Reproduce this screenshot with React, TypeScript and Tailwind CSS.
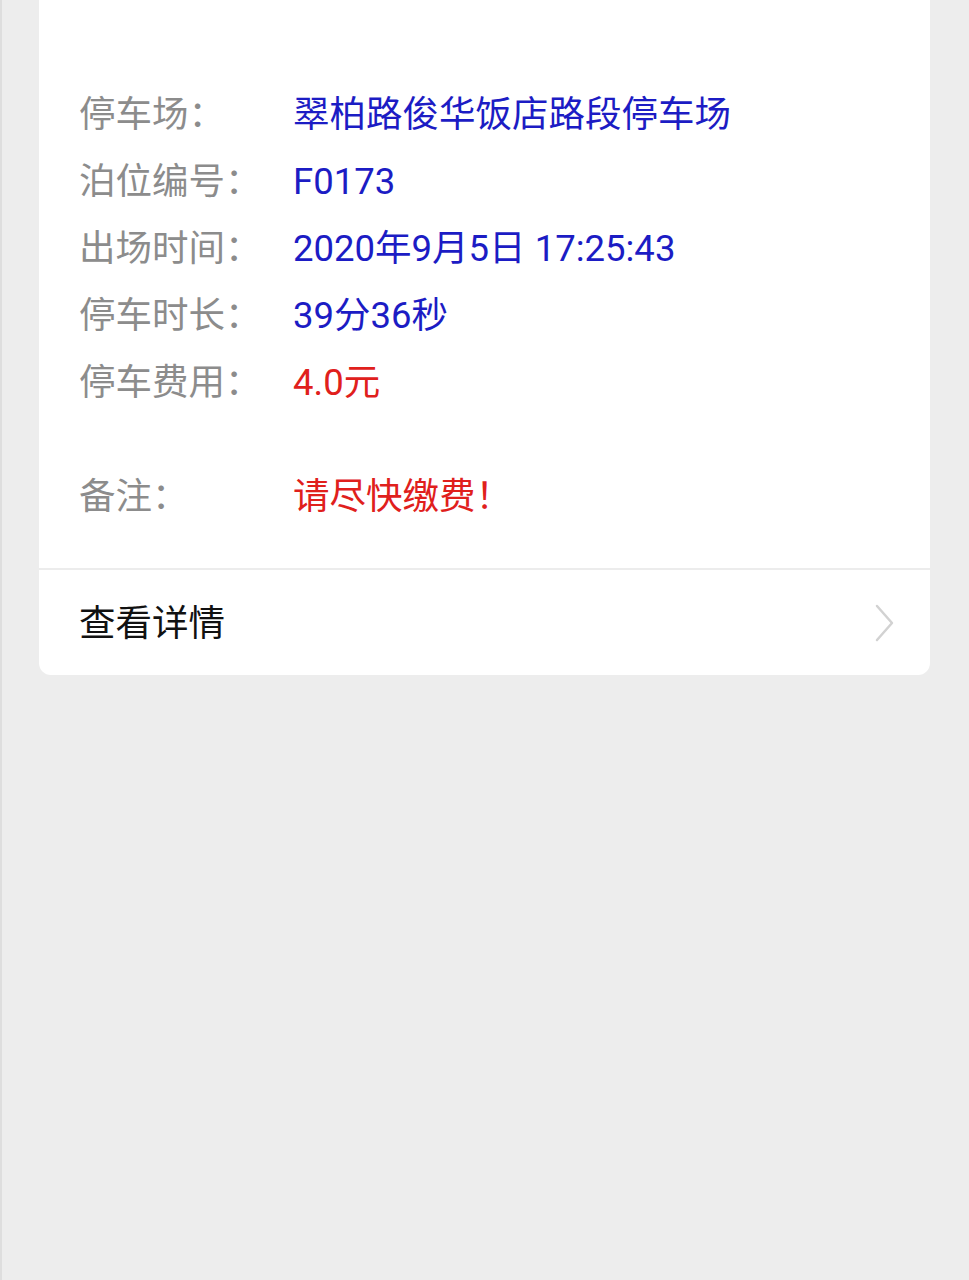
interface Row {
  label: string
  value: string
  tone: 'blue' | 'red'
}

const rows: Row[] = [
  { label: '停车场：', value: '翠柏路俊华饭店路段停车场', tone: 'blue' },
  { label: '泊位编号：', value: 'F0173', tone: 'blue' },
  { label: '出场时间：', value: '2020年9月5日 17:25:43', tone: 'blue' },
  { label: '停车时长：', value: '39分36秒', tone: 'blue' },
  { label: '停车费用：', value: '4.0元', tone: 'red' },
]

function InfoRow({ label, value, tone }: Row) {
  return (
    <div className="flex h-[67px] items-center">
      <div className="w-[214px] shrink-0 text-[#8c8c8c]">{label}</div>
      <div className={tone === 'red' ? 'text-[#e0201c]' : 'text-[#1c1cc4]'}>{value}</div>
    </div>
  )
}

export default function App() {
  return (
    <div
      className="min-h-[1280px] w-full bg-[#ededed] border-l-2 border-[#dedede]"
      style={{ fontFamily: "Roboto, 'Noto Sans CJK SC', sans-serif" }}
    >
      <div className="ml-[37px] w-[891px] rounded-b-[12px] bg-white">
        <div className="pt-[82px] pb-[37px] pl-[40px] text-[36.5px] leading-none">
          {rows.map((r) => (
            <InfoRow key={r.label} {...r} />
          ))}
          <div className="mt-[47px]">
            <InfoRow label="备注：" value="请尽快缴费！" tone="red" />
          </div>
        </div>
        <div className="h-[2px] bg-[#ececec]" />
        <div className="flex h-[105px] items-center justify-between pl-[40px] pr-[35px]">
          <span className="pt-[4px] text-[36.5px] leading-none text-[#111]">查看详情</span>
          <svg width="20" height="38" viewBox="0 0 20 38" fill="none">
            <polyline points="2,2 17,19 2,36" stroke="#d2d2d2" strokeWidth="2.5" strokeLinecap="round" strokeLinejoin="round" />
          </svg>
        </div>
      </div>
    </div>
  )
}
